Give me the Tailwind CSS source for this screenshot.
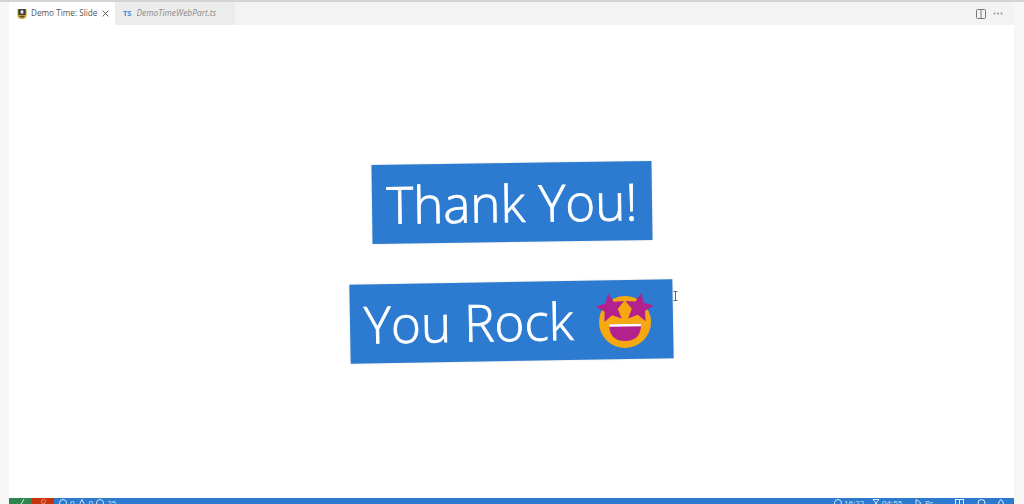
<!doctype html>
<html><head><meta charset="utf-8"><script src="https://cdn.jsdelivr.net/npm/@tailwindcss/browser@4"></script></head>
<body class="m-0">
<div class="w-[1024px] h-[504px] overflow-hidden bg-[#f6f6f6] flex flex-col font-['Open_Sans',sans-serif]">
  <div class="h-[2px] bg-[#d4d4d4] shrink-0"></div>
  <div class="flex-1 min-h-0 flex flex-col ml-[9px] mr-[10px] bg-white">
    <div class="h-[23px] shrink-0 bg-[#f3f3f3] flex items-stretch">
      <div class="w-[106px] bg-white flex items-center pl-[8px] gap-[4px]">
        <svg class="shrink-0" width="10" height="12" viewBox="0 0 11 12"><path d="M0.500 1H10.500V7.500Q10.500 11.500 5.500 11.500Q0.500 11.500 0.500 7.500Z" fill="#c9a227"/><rect x="1.500" y="0.500" width="8" height="6.500" fill="#3b3b3b"/><rect x="4" y="2" width="3" height="3.500" fill="#e8e8e8"/><rect x="3" y="8" width="5" height="1.600" fill="#4a4a4a"/></svg>
        <span class="text-[8.2px] leading-none text-[#555] whitespace-nowrap">Demo Time: Slide</span>
        <svg class="ml-[1px] shrink-0" width="7" height="7" viewBox="0 0 7 7"><path d="M0.500 0.500L6.500 6.500M6.500 0.500L0.500 6.500" stroke="#666" stroke-width="1"/></svg>
      </div>
      <div class="w-[120px] bg-[#ececec] flex items-center pl-[8px] gap-[5px]">
        <span class="text-[7.500px] font-bold leading-none text-[#3f8fd0]">TS</span>
        <span class="text-[8.400px] italic leading-none text-[#8a8a8a] whitespace-nowrap">DemoTimeWebPart.ts</span>
      </div>
      <div class="flex-1 flex items-center justify-end pr-[11px] gap-[7px]">
        <svg width="10" height="10" viewBox="0 0 10 10"><rect x="0.500" y="0.500" width="9" height="9" rx="1" fill="none" stroke="#777"/><path d="M5 0.500V9.500" stroke="#777"/></svg>
        <svg width="10" height="3" viewBox="0 0 10 3"><circle cx="1.500" cy="1.500" r="0.900" fill="#888"/><circle cx="5" cy="1.500" r="0.900" fill="#888"/><circle cx="8.500" cy="1.500" r="0.900" fill="#888"/></svg>
      </div>
    </div>
    <main class="flex-1 min-h-0 bg-white flex flex-col items-center pt-[138px] gap-[40px] relative">
      <div class="-rotate-[0.8deg] w-[280px] h-[79px] bg-[#2d7bd0] flex items-center justify-center text-white text-[51px] font-light [-webkit-text-stroke:0.8px_white] leading-none whitespace-nowrap shadow-[0_0_2px_rgba(0,0,0,0.15)]">Thank You!</div>
      <div class="-rotate-[1deg] w-[323px] h-[79px] bg-[#2d7bd0] flex items-center pl-[14px] text-white text-[51px] font-light [-webkit-text-stroke:0.8px_white] leading-none whitespace-nowrap shadow-[0_0_2px_rgba(0,0,0,0.15)]">
        <span class="w-[234px]">You Rock</span>
        <svg class="shrink-0 overflow-visible" width="54" height="54" viewBox="0 0 54 54">
          <circle cx="27" cy="29" r="26" fill="#f5a80f"/>
          <path transform="translate(13,15) rotate(-10) scale(1.080)" d="M0-14L3.800-5.300 13.300-4.300 6.200 2 8.200 11.300 0 6.500-8.200 11.300-6.200 2-13.300-4.300-3.800-5.300Z" fill="#b3228c"/>
          <path transform="translate(41,15) rotate(10) scale(1.080)" d="M0-14L3.800-5.300 13.300-4.300 6.200 2 8.200 11.300 0 6.500-8.200 11.300-6.200 2-13.300-4.300-3.800-5.300Z" fill="#b3228c"/>
          <path d="M11 31H43Q43 48 27 48Q11 48 11 31Z" fill="#b3228c"/>
          <path d="M11 31H43L42.700 33.500H11.300Z" fill="#fff"/>
        </svg>
      </div>
      <svg class="absolute left-[664px] top-[266px]" width="5" height="10" viewBox="0 0 5 10"><path d="M0.500 0.500H4.500M2.500 0.500V9.500M0.500 9.500H4.500" stroke="#666" fill="none"/></svg>
    </main>
    <footer class="h-[6px] shrink-0 bg-[#2b7ad0] flex items-start overflow-hidden">
      <div class="w-[23px] h-full bg-[#2e8550] flex justify-center"><svg class="mt-[1px]" width="9" height="5" viewBox="0 0 9 5"><path d="M1 5L4 7L8 0" stroke="#d8ecdf" fill="none"/></svg></div>
      <div class="w-[22px] h-full bg-[#c7340c] flex justify-center"><svg class="mt-[1px]" width="9" height="5" viewBox="0 0 9 9"><circle cx="4.500" cy="4.500" r="3.800" stroke="#f3d3c8" fill="none"/></svg></div>
      <div class="flex-1 flex justify-between pl-[5px] pr-[9px] pt-[1px] text-[8px] leading-none text-[#cfe3f7]">
        <span class="flex items-start gap-[3px]">
          <svg width="8" height="8" viewBox="0 0 8 8"><circle cx="4" cy="4" r="3.500" stroke="#cfe3f7" fill="none"/></svg><span>0</span>
          <svg width="8" height="8" viewBox="0 0 8 8"><path d="M4 0.500L7.500 7.500H0.500Z" stroke="#cfe3f7" fill="none"/></svg><span>0</span>
          <svg width="8" height="8" viewBox="0 0 8 8"><circle cx="4" cy="4" r="3.500" stroke="#cfe3f7" fill="none"/></svg><span>25</span>
        </span>
        <span class="flex items-start">
          <svg width="8" height="8" viewBox="0 0 8 8"><circle cx="4" cy="4" r="3.500" stroke="#cfe3f7" fill="none"/></svg>
          <span class="ml-[2px] w-[28px]">16:22</span>
          <svg width="8" height="8" viewBox="0 0 8 8"><path d="M1 0.500H7L1 7.500H7Z" stroke="#cfe3f7" fill="none"/></svg>
          <span class="ml-[2px] w-[33px]">04:55</span>
          <svg width="8" height="8" viewBox="0 0 8 8"><path d="M1 0.500L6 4L1 7.500Z" stroke="#cfe3f7" fill="none"/></svg>
          <span class="ml-[2px] w-[30px]">Pr</span>
          <svg width="9" height="8" viewBox="0 0 9 8"><rect x="0.500" y="0.500" width="8" height="7" stroke="#e6f0fb" fill="none"/><path d="M4.500 0.500V8" stroke="#e6f0fb"/></svg>
          <svg class="ml-[13px]" width="9" height="8" viewBox="0 0 9 8"><circle cx="4.500" cy="4" r="3.500" stroke="#e6f0fb" fill="none"/></svg>
          <svg class="ml-[11px]" width="8" height="8" viewBox="0 0 8 8"><path d="M4 0.500Q7 2 6.500 7.500H1.500Q1 2 4 0.500Z" stroke="#e6f0fb" fill="none"/></svg>
        </span>
      </div>
    </footer>
  </div>
</div>
</body></html>
